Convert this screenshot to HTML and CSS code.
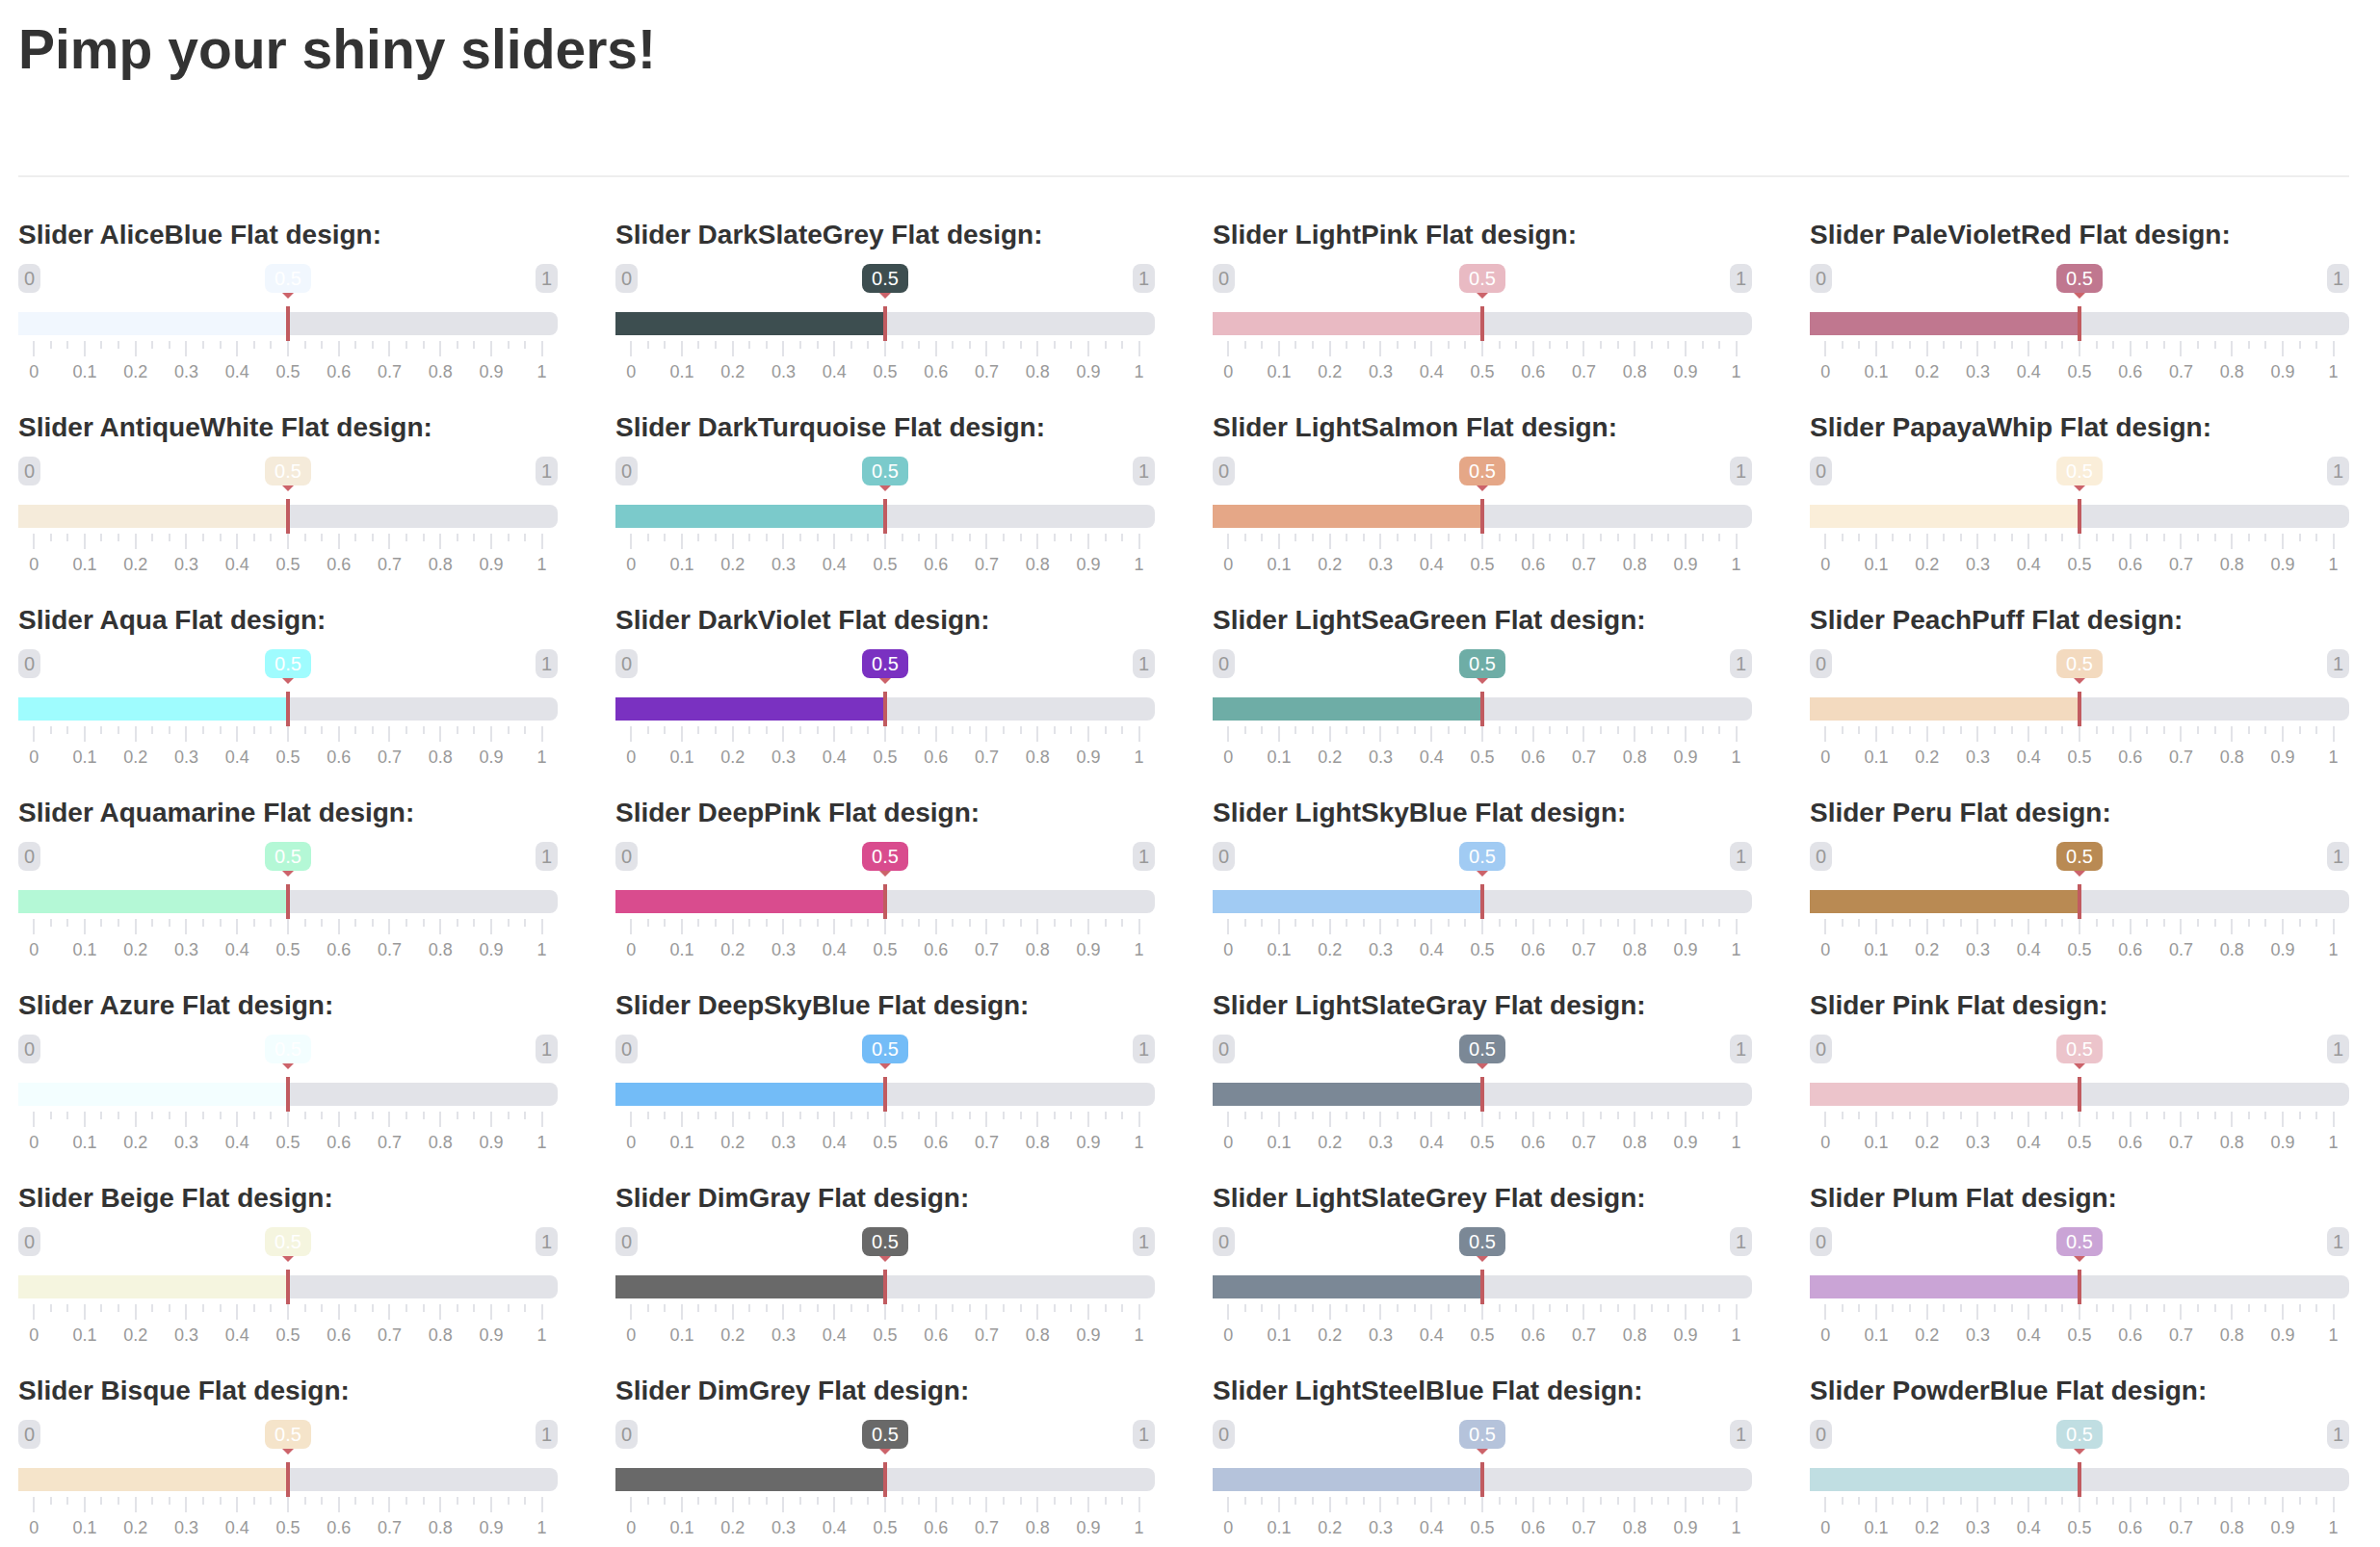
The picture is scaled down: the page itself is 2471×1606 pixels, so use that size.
FILE: index.html
```html
<!DOCTYPE html>
<html lang="en">
<head>
<meta charset="utf-8">
<title>Pimp your shiny sliders!</title>
<link rel="stylesheet" href="styles.css">
</head>
<body>
<header class="page-header">
  <h1 class="page-title">Pimp your shiny sliders!</h1>
</header>
<main class="sliders" id="sliders"></main>

<template id="slider-template">
  <section class="slider">
    <label class="slider-label"></label>
    <div class="tags">
      <span class="tag">0</span>
      <output class="tag tag-value">0.5</output>
      <span class="tag">1</span>
    </div>
    <input class="range" type="range" min="0" max="1" step="0.1" value="0.5">
    <div class="ticks"></div>
    <div class="scale"></div>
  </section>
</template>
<script src="sliders.js"></script>
</body>
</html>
```
FILE: styles.css
```css
* {
  box-sizing: border-box;
}

body {
  margin: 0;
  padding: 21px 32px 0 19px;
  background: #fff;
  color: #333;
  font-family: "Liberation Sans", Arial, sans-serif;
}

.page-header {
  padding-bottom: 101px;
  border-bottom: 2px solid #eee;
}

.page-title {
  margin: 0;
  font-size: 57px;
  line-height: 60px;
  font-weight: 700;
}

.sliders {
  display: grid;
  grid-template-columns: repeat(4, 1fr);
  grid-template-rows: repeat(7, auto);
  grid-auto-flow: column;
  gap: 28px 60px;
  padding-top: 40px;
}

.slider {
  display: flex;
  flex-direction: column;
  min-width: 0;
}

.slider-label {
  margin-bottom: 10px;
  font-size: 28px;
  line-height: 40px;
  font-weight: 700;
  white-space: nowrap;
}

.tags {
  display: grid;
  grid-template-columns: 1fr auto 1fr;
  margin-bottom: 14px;
}

.tag {
  justify-self: start;
  padding: 0 6px;
  border-radius: 8px;
  background: #e2e3e8;
  color: #999;
  font-size: 20px;
  line-height: 30px;
}

.tag:last-child {
  justify-self: end;
}

.tag-value {
  position: relative;
  padding: 0 10px;
  background: var(--fill);
  color: #fff;
}

.tag-value::after {
  content: "";
  position: absolute;
  top: 100%;
  left: 50%;
  margin-left: -6px;
  border: 6px solid transparent;
  border-top-color: #cc636a;
  border-bottom-width: 0;
}

.range {
  appearance: none;
  width: 100%;
  height: 36px;
  margin: 0;
  background: none;
}

.range::-webkit-slider-runnable-track {
  height: 24px;
  border-radius: 0 8px 8px 0;
  background: linear-gradient(to right, var(--fill) var(--position), #e2e3e8 var(--position));
}

.range::-webkit-slider-thumb {
  appearance: none;
  width: 4px;
  height: 36px;
  margin-top: -6px;
  background: #c15b60;
}

.ticks {
  display: flex;
  justify-content: space-between;
  height: 16px;
  margin: 0 15px 6px;
}

.tick {
  width: 2px;
  height: 8px;
  background: #e2e3e8;
}

.tick-major {
  height: 16px;
}

.scale {
  display: grid;
  grid-template-columns: repeat(11, 1fr);
  margin: 0 -10px;
  color: #999;
  font-size: 18px;
  line-height: 20px;
  text-align: center;
}
```
FILE: sliders.js
```js
// Display order runs down each column, seven sliders to a column.
const sliders = [
  ["AliceBlue", "#f1f7fe"],
  ["AntiqueWhite", "#f5ebda"],
  ["Aqua", "#9ffcfe"],
  ["Aquamarine", "#b4f8d6"],
  ["Azure", "#f3feff"],
  ["Beige", "#f5f5df"],
  ["Bisque", "#f5e4ca"],
  ["DarkSlateGrey", "#3d4e50"],
  ["DarkTurquoise", "#7bcacb"],
  ["DarkViolet", "#7a31c1"],
  ["DeepPink", "#d94c8e"],
  ["DeepSkyBlue", "#73bcf7"],
  ["DimGray", "#696969"],
  ["DimGrey", "#696969"],
  ["LightPink", "#e9bac3"],
  ["LightSalmon", "#e5a787"],
  ["LightSeaGreen", "#6eada6"],
  ["LightSkyBlue", "#a1cbf3"],
  ["LightSlateGray", "#7b8896"],
  ["LightSlateGrey", "#7b8896"],
  ["LightSteelBlue", "#b5c3db"],
  ["PaleVioletRed", "#c0778f"],
  ["PapayaWhip", "#faeed9"],
  ["PeachPuff", "#f3dabf"],
  ["Peru", "#b98a53"],
  ["Pink", "#ecc4cb"],
  ["Plum", "#caa4d6"],
  ["PowderBlue", "#c0dee2"]
];

const list = document.getElementById("sliders");
const template = document.getElementById("slider-template");

for (const [name, fill] of sliders) {
  const slider = template.content.cloneNode(true).firstElementChild;
  const label = slider.querySelector("label");
  const range = slider.querySelector("input");
  const output = slider.querySelector("output");
  const ticks = slider.querySelector(".ticks");
  const scale = slider.querySelector(".scale");

  label.textContent = `Slider ${name} Flat design:`;
  label.htmlFor = range.id = `slider-${name}`;
  slider.style.setProperty("--fill", fill);
  slider.style.setProperty("--position", "50%");

  for (let i = 0; i <= 30; i++) {
    const tick = document.createElement("span");
    tick.className = i % 3 === 0 ? "tick tick-major" : "tick";
    ticks.append(tick);
  }
  for (let i = 0; i <= 10; i++) {
    const mark = document.createElement("span");
    mark.textContent = i / 10;
    scale.append(mark);
  }

  range.addEventListener("input", () => {
    output.value = range.value;
    slider.style.setProperty("--position", `${range.value * 100}%`);
  });

  list.append(slider);
}
```
